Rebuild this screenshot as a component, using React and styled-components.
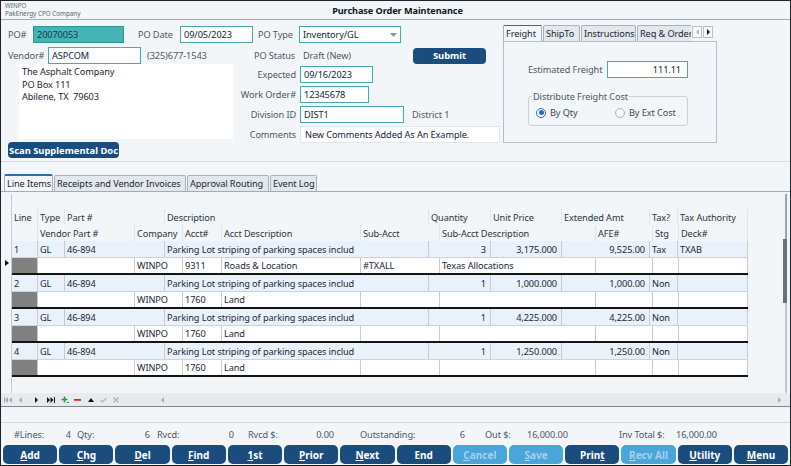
import React from 'react';
import styled, { createGlobalStyle } from 'styled-components';

const FONT = `"Noto Sans", "Open Sans", sans-serif`;

const Global = createGlobalStyle`
  html, body { margin: 0; padding: 0; background: #ffffff; }
  * { box-sizing: border-box; }
`;

const Window = styled.div`
  width: 791px;
  height: 466px;
  border: 1px solid #1c232b;
  background: #f2f6f9;
  display: flex;
  flex-direction: column;
  font-family: ${FONT};
  font-size: 9.2px;
  letter-spacing: -0.1px;
  color: #1d2733;
  overflow: hidden;
`;

const TitleBar = styled.div`
  height: 19px;
  flex: none;
  display: grid;
  grid-template-columns: 1fr auto 1fr;
  align-items: center;
  border-bottom: 1px solid #a3abb3;
  padding: 0 4px;
`;
const AppInfo = styled.div`
  font-size: 6.3px;
  line-height: 8px;
  color: #5a6570;
  align-self: start;
  padding-top: 1px;
  letter-spacing: 0;
`;
const Title = styled.div`
  font-weight: 700;
  font-size: 9.2px;
  color: #101820;
  padding-left: 4px;
`;

const HeaderForm = styled.div`
  height: 142px;
  flex: none;
  display: flex;
  padding: 5px 0 0 7px;
  border-bottom: 1px solid #d6dce2;
`;
const FormArea = styled.div`
  width: 495px;
  display: flex;
  flex-direction: column;
`;
const FormRow = styled.div`
  display: flex;
  align-items: center;
  height: 17px;
  margin-top: ${p => p.$mt || 0}px;
`;
const Label = styled.span`
  width: ${p => (p.$w ? `${p.$w}px` : 'auto')};
  flex: none;
  margin-left: ${p => p.$ml || 0}px;
  color: #4e5863;
  white-space: nowrap;
  text-align: ${p => p.$align || 'left'};
  justify-self: ${p => (p.$align === 'right' ? 'end' : 'start')};
`;
const Input = styled.div`
  width: ${p => p.$w}px;
  height: 17px;
  flex: none;
  border: 1.5px solid ${p => (p.$filled ? '#2f9597' : '#48a9a9')};
  background: ${p => (p.$filled ? '#44b4b7' : '#ffffff')};
  display: flex;
  align-items: center;
  justify-content: ${p => (p.$right ? 'flex-end' : 'space-between')};
  padding: 0 ${p => (p.$right ? 6 : 3)}px 0 3px;
  color: ${p => (p.$filled ? '#143c44' : '#15253a')};
  white-space: nowrap;
  overflow: hidden;
`;
const PlainBox = styled.div`
  width: ${p => p.$w}px;
  height: 17px;
  background: #ffffff;
  border: 1px solid #e2e7ec;
  display: flex;
  align-items: center;
  padding: 0 4px;
  color: #15253a;
  white-space: nowrap;
`;
const NavyButton = styled.div`
  width: ${p => p.$w}px;
  height: ${p => p.$h}px;
  margin-left: ${p => p.$ml || 0}px;
  margin-top: ${p => p.$mt || 0}px;
  flex: none;
  background: #1b4c7e;
  color: #ffffff;
  font-weight: 700;
  font-size: 9.4px;
  letter-spacing: 0;
  border-radius: 4px;
  display: flex;
  align-items: center;
  justify-content: center;
  white-space: nowrap;
`;
const LowerBlock = styled.div`
  display: flex;
`;
const AddressCol = styled.div`
  width: 242px;
  display: flex;
  flex-direction: column;
`;
const AddressBox = styled.div`
  margin-left: 11px;
  width: 214px;
  height: 75px;
  background: #ffffff;
  padding: 2px 3px;
  line-height: 12.5px;
  color: #1d2733;
`;
const DetailGrid = styled.div`
  margin-top: 2px;
  display: grid;
  grid-template-columns: 46px auto;
  column-gap: 4px;
  row-gap: 3px;
  grid-auto-rows: 17px;
  align-items: center;
`;
const FieldLine = styled.div`
  display: flex;
  align-items: center;
`;

/* Freight panel */
const SidePanel = styled.div`
  width: 214px;
  display: flex;
  flex-direction: column;
`;
const TabStrip = styled.div`
  display: flex;
  align-items: flex-end;
  height: ${p => p.$h}px;
  padding-left: ${p => p.$pl || 0}px;
  gap: 1px;
  border-bottom: ${p => (p.$line ? '1px solid #9fadbb' : 'none')};
  flex: none;
`;
const TabClip = styled.div`
  display: flex;
  align-items: flex-end;
  gap: 1px;
  width: ${p => p.$w}px;
  overflow: hidden;
  height: 100%;
`;
const Tab = styled.div`
  width: ${p => p.$w}px;
  flex: none;
  height: ${p => (p.$active ? 17 : 16)}px;
  padding: 0 2px;
  border: 1px solid #a8b2bc;
  border-bottom: none;
  border-top: ${p => (p.$active ? '2px solid #2b6cb3' : '1px solid #a8b2bc')};
  border-radius: 2px 2px 0 0;
  background: ${p => (p.$active ? '#f4f7fa' : '#e3e8ed')};
  display: flex;
  align-items: center;
  white-space: nowrap;
  overflow: hidden;
  color: #1d2733;
`;
const ArrowBox = styled.div`
  width: 10px;
  height: 12px;
  margin-bottom: 3px;
  border: 1px solid #b8c0c8;
  background: #f6f8fa;
  display: flex;
  align-items: center;
  justify-content: center;
`;
const PanelBody = styled.div`
  height: 102px;
  border: 1px solid #b5bec7;
  padding: 19px 0 0 24px;
  display: flex;
  flex-direction: column;
`;
const GroupBox = styled.fieldset`
  margin: 12px 0 0 0;
  width: 160px;
  height: 36px;
  border: 1px solid #c9d0d6;
  border-radius: 3px;
  padding: 3px 0 0 7px;
  display: flex;
  align-items: flex-start;
`;
const Legend = styled.legend`
  padding: 0 1px;
  margin-left: -4px;
  color: #4e5863;
  font-size: 9.2px;
`;
const RadioItem = styled.div`
  display: flex;
  align-items: center;
  gap: 4px;
  width: ${p => p.$w}px;
  color: #3f4a55;
`;
const RadioDot = styled.span`
  width: 10px;
  height: 10px;
  border-radius: 50%;
  border: ${p => (p.$on ? '1.5px solid #2c6bb5' : '1px solid #a9b1b9')};
  background: ${p => (p.$on ? '#ffffff' : '#f4f6f8')};
  display: flex;
  align-items: center;
  justify-content: center;
  &::after {
    content: '';
    width: 5px;
    height: 5px;
    border-radius: 50%;
    background: ${p => (p.$on ? '#2c6bb5' : 'transparent')};
  }
`;

/* Line items */
const GridPanel = styled.div`
  height: 215px;
  flex: none;
  display: flex;
  flex-direction: column;
  border-bottom: 1px solid #7d848b;
`;
const GridArea = styled.div`
  flex: 1;
  display: flex;
  padding-top: 2px;
`;
const Grid = styled.div`
  width: 737px;
  margin-left: 10px;
  border-left: 1px solid #c3cbd3;
  padding-top: 15px;
  display: flex;
  flex-direction: column;
  flex: none;
`;
const HeadRow = styled.div`
  display: grid;
  grid-template-columns: ${p => p.$cols};
  height: 16px;
`;
const HeadCell = styled.div`
  border-right: 1px solid #e0e5ea;
  padding: 0 2px;
  display: flex;
  align-items: center;
  white-space: nowrap;
  overflow: hidden;
  color: #2b3540;
`;
const Record = styled.div`
  position: relative;
  border-bottom: 2px solid #141414;
`;
const Indicator = styled.span`
  position: absolute;
  left: -7px;
  top: 19px;
  width: 0;
  height: 0;
  border-top: 3px solid transparent;
  border-bottom: 3px solid transparent;
  border-left: 4px solid #111;
`;
const DataRow = styled.div`
  display: grid;
  grid-template-columns: ${p => p.$cols};
  height: ${p => p.$h}px;
  background: ${p => p.$bg};
  border-bottom: ${p => (p.$line ? '1px solid #cdd3d8' : 'none')};
`;
const Cell = styled.div`
  border-right: 1px solid #c6ccd2;
  padding: 0 ${p => (p.$right ? 4 : 2)}px 0 2px;
  display: flex;
  align-items: center;
  justify-content: ${p => (p.$right ? 'flex-end' : 'flex-start')};
  white-space: nowrap;
  overflow: hidden;
  background: ${p => (p.$gray ? '#808080' : 'transparent')};
  color: #1d2733;
`;
const VScroll = styled.div`
  margin-left: auto;
  margin-right: 3px;
  width: 4px;
  display: flex;
  flex-direction: column;
  align-items: flex-end;
`;
const ScrollLine = styled.div`
  flex: ${p => p.$flex || 'none'};
  height: ${p => (p.$h ? `${p.$h}px` : 'auto')};
  background: ${p => p.$c};
  width: ${p => (p.$thick ? 4 : 2)}px;
`;
const NavStrip = styled.div`
  height: 13px;
  flex: none;
  display: flex;
  align-items: center;
  background: #e7ebef;
  padding-left: 2px;
`;
const NavSlot = styled.span`
  margin-left: ${p => p.$ml}px;
  display: flex;
  align-items: center;
`;
const HScroll = styled.div`
  margin-left: 42px;
  width: 620px;
  display: flex;
  justify-content: space-between;
  align-items: center;
`;
const BlankBand = styled.div`
  height: 16px;
  flex: none;
  border-bottom: 1px solid #d2d8de;
`;
const SummaryBar = styled.div`
  height: 21px;
  flex: none;
  display: flex;
  align-items: center;
  padding: 1px 0 0 13px;
  color: #4e5863;
`;
const SumCell = styled.span`
  width: ${p => p.$w}px;
  flex: none;
  text-align: ${p => (p.$right ? 'right' : 'left')};
  white-space: nowrap;
`;
const ButtonBar = styled.div`
  height: 21px;
  flex: none;
  display: flex;
  gap: 2px;
  padding: 1px 2px 1px 2px;
`;
const ActionButton = styled.div`
  flex: 1;
  border-radius: 5px;
  background: ${p => (p.$disabled ? '#4aa5db' : '#1b4c7e')};
  color: ${p => (p.$disabled ? '#a3d2ee' : '#ffffff')};
  font-weight: 700;
  font-size: 10px;
  letter-spacing: 0;
  display: flex;
  align-items: center;
  justify-content: center;
  white-space: nowrap;
  u { text-underline-offset: 1px; }
`;

const MAIN_COLS = '26px 27px 100px 264px 62px 71px 88px 28px 70px';
const SUB_COLS = '26px 97px 48px 39px 139px 79px 156px 57px 26px 69px';

const records = [
  { n: '1', qty: '3', price: '3,175.000', ext: '9,525.00', tax: 'Tax', auth: 'TXAB', acct: '9311', acctDesc: 'Roads & Location', sub: '#TXALL', subDesc: 'Texas Allocations', current: true },
  { n: '2', qty: '1', price: '1,000.000', ext: '1,000.00', tax: 'Non', auth: '', acct: '1760', acctDesc: 'Land', sub: '', subDesc: '' },
  { n: '3', qty: '1', price: '4,225.000', ext: '4,225.00', tax: 'Non', auth: '', acct: '1760', acctDesc: 'Land', sub: '', subDesc: '' },
  { n: '4', qty: '1', price: '1,250.000', ext: '1,250.00', tax: 'Non', auth: '', acct: '1760', acctDesc: 'Land', sub: '', subDesc: '' },
];

const Tri = ({ dir = 'right', color = '#111', w = 4, h = 7 }) => (
  <svg width={w} height={h} viewBox={`0 0 ${w} ${h}`}>
    {dir === 'right' && <path d={`M0 0 L${w} ${h / 2} L0 ${h} Z`} fill={color} />}
    {dir === 'left' && <path d={`M${w} 0 L0 ${h / 2} L${w} ${h} Z`} fill={color} />}
    {dir === 'down' && <path d={`M0 0 L${w} 0 L${w / 2} ${h} Z`} fill={color} />}
    {dir === 'up' && <path d={`M0 ${h} L${w} ${h} L${w / 2} 0 Z`} fill={color} />}
  </svg>
);

const NavFirst = ({ c }) => (
  <svg width="8" height="6" viewBox="0 0 8 6"><rect x="0" y="0" width="1" height="6" fill={c} /><path d="M4 0 L1 3 L4 6Z M8 0 L5 3 L8 6Z" fill={c} /></svg>
);
const NavLast = ({ c }) => (
  <svg width="8" height="6" viewBox="0 0 8 6"><path d="M0 0 L3 3 L0 6Z M3.5 0 L6.5 3 L3.5 6Z" fill={c} /><rect x="7" y="0" width="1" height="6" fill={c} /></svg>
);
const NavPlus = () => (
  <svg width="8" height="8" viewBox="0 0 8 8"><path d="M3.5 0.5 V6.5 M0.5 3.5 H6.5" stroke="#2a9d2a" strokeWidth="1.6" /><path d="M6 6.5 H8" stroke="#2a9d2a" strokeWidth="1" /></svg>
);
const NavMinus = () => (
  <svg width="7" height="6" viewBox="0 0 7 6"><rect x="0" y="2" width="7" height="1.8" fill="#d42a2a" /></svg>
);
const NavCheck = () => (
  <svg width="7" height="6" viewBox="0 0 7 6"><path d="M0.5 3 L2.5 5 L6.5 0.8" stroke="#a9b2ba" strokeWidth="1.1" fill="none" /></svg>
);
const NavX = () => (
  <svg width="6" height="6" viewBox="0 0 6 6"><path d="M0.5 0.5 L5.5 5.5 M5.5 0.5 L0.5 5.5" stroke="#a9b2ba" strokeWidth="1.1" /></svg>
);

const buttons = [
  { u: 'A', rest: 'dd' },
  { u: 'C', rest: 'hg' },
  { u: 'D', rest: 'el' },
  { u: 'F', rest: 'ind' },
  { u: '1', rest: 'st' },
  { u: 'P', rest: 'rior' },
  { u: 'N', rest: 'ext' },
  { u: '', rest: 'End' },
  { u: 'C', rest: 'ancel', disabled: true },
  { u: 'S', rest: 'ave', disabled: true },
  { pre: 'Prin', u: 't', rest: '' },
  { u: 'R', rest: 'ecv All', disabled: true },
  { u: 'U', rest: 'tility' },
  { u: 'M', rest: 'enu' },
];

export default function App() {
  return (
    <>
      <Global />
      <Window>
        <TitleBar>
          <AppInfo>
            <div>WINPO</div>
            <div>PakEnergy CPO Company</div>
          </AppInfo>
          <Title>Purchase Order Maintenance</Title>
          <span />
        </TitleBar>

        <HeaderForm>
          <FormArea>
            <FormRow $mt={1}>
              <Label $w={25}>PO#</Label>
              <Input $w={91} $filled>20070053</Input>
              <Label $w={42} $ml={14}>PO Date</Label>
              <Input $w={73}>09/05/2023</Input>
              <Label $w={41} $ml={5}>PO Type</Label>
              <Input $w={102}>
                <span>Inventory/GL</span>
                <Tri dir="down" color="#8c949b" w={7} h={4} />
              </Input>
            </FormRow>
            <FormRow $mt={4}>
              <Label $w={40}>Vendor#</Label>
              <Input $w={93}>ASPCOM</Input>
              <Label $w={107} $ml={6}>(325)677-1543</Label>
              <Label $w={49}>PO Status</Label>
              <Label $w={110}>Draft (New)</Label>
              <NavyButton $w={73} $h={16}>Submit</NavyButton>
            </FormRow>
            <LowerBlock>
              <AddressCol>
                <AddressBox>
                  <div>The Asphalt Company</div>
                  <div>PO Box 111</div>
                  <div>Abilene, TX&nbsp;&nbsp;79603</div>
                </AddressBox>
                <NavyButton $w={111} $h={16} $mt={3}>Scan Supplemental Doc</NavyButton>
              </AddressCol>
              <DetailGrid>
                <Label $align="right">Expected</Label>
                <FieldLine><Input $w={73}>09/16/2023</Input></FieldLine>
                <Label $align="right">Work Order#</Label>
                <FieldLine><Input $w={69}>12345678</Input></FieldLine>
                <Label $align="right">Division ID</Label>
                <FieldLine>
                  <Input $w={104}>DIST1</Input>
                  <Label $ml={8}>District 1</Label>
                </FieldLine>
                <Label $align="right">Comments</Label>
                <FieldLine><PlainBox $w={200}>New Comments Added As An Example.</PlainBox></FieldLine>
              </DetailGrid>
            </LowerBlock>
          </FormArea>

          <SidePanel>
            <TabStrip $h={16}>
              <TabClip $w={188}>
                <Tab $w={39} $active>Freight</Tab>
                <Tab $w={37}>ShipTo</Tab>
                <Tab $w={55}>Instructions</Tab>
                <Tab $w={60}>Req &amp; Order</Tab>
              </TabClip>
              <ArrowBox><Tri dir="left" color="#b2bac2" w={3} h={6} /></ArrowBox>
              <ArrowBox><Tri dir="right" color="#111" w={3} h={6} /></ArrowBox>
            </TabStrip>
            <PanelBody>
              <FormRow>
                <Label $w={79}>Estimated Freight</Label>
                <Input $w={81} $right>111.11</Input>
              </FormRow>
              <GroupBox>
                <Legend>Distribute Freight Cost</Legend>
                <RadioItem $w={79}><RadioDot $on />By Qty</RadioItem>
                <RadioItem $w={70}><RadioDot />By Ext Cost</RadioItem>
              </GroupBox>
            </PanelBody>
          </SidePanel>
        </HeaderForm>

        <TabStrip $h={30} $pl={3} $line>
          <Tab $w={49} $active>Line Items</Tab>
          <Tab $w={132}>Receipts and Vendor Invoices</Tab>
          <Tab $w={82}>Approval Routing</Tab>
          <Tab $w={47}>Event Log</Tab>
        </TabStrip>

        <GridPanel>
          <GridArea>
            <Grid>
              <HeadRow $cols={MAIN_COLS}>
                {['Line', 'Type', 'Part #', 'Description', 'Quantity', 'Unit Price', 'Extended Amt', 'Tax?', 'Tax Authority'].map((h, i) => (
                  <HeadCell key={i}>{h}</HeadCell>
                ))}
              </HeadRow>
              <HeadRow $cols={SUB_COLS}>
                {['', 'Vendor Part #', 'Company', 'Acct#', 'Acct Description', 'Sub-Acct', 'Sub-Acct Description', 'AFE#', 'Stg', 'Deck#'].map((h, i) => (
                  <HeadCell key={i}>{h}</HeadCell>
                ))}
              </HeadRow>
              {records.map(r => (
                <Record key={r.n}>
                  {r.current && <Indicator />}
                  <DataRow $cols={MAIN_COLS} $h={17} $bg="#e9f2fa" $line>
                    <Cell>{r.n}</Cell>
                    <Cell>GL</Cell>
                    <Cell>46-894</Cell>
                    <Cell>Parking Lot striping of parking spaces includ</Cell>
                    <Cell $right>{r.qty}</Cell>
                    <Cell $right>{r.price}</Cell>
                    <Cell $right>{r.ext}</Cell>
                    <Cell>{r.tax}</Cell>
                    <Cell>{r.auth}</Cell>
                  </DataRow>
                  <DataRow $cols={SUB_COLS} $h={15} $bg="#ffffff">
                    <Cell $gray />
                    <Cell />
                    <Cell>WINPO</Cell>
                    <Cell>{r.acct}</Cell>
                    <Cell>{r.acctDesc}</Cell>
                    <Cell>{r.sub}</Cell>
                    <Cell>{r.subDesc}</Cell>
                    <Cell />
                    <Cell />
                    <Cell />
                  </DataRow>
                </Record>
              ))}
            </Grid>
            <VScroll>
              <ScrollLine $h={45} $c="#9aa2aa" />
              <ScrollLine $h={64} $c="#6a7279" $thick />
              <ScrollLine $flex="1" $c="#c3c9cf" />
            </VScroll>
          </GridArea>
          <NavStrip>
            <NavSlot $ml={1}><NavFirst c="#a3acb4" /></NavSlot>
            <NavSlot $ml={7}><Tri dir="left" color="#a3acb4" w={3} h={6} /></NavSlot>
            <NavSlot $ml={13}><Tri dir="right" color="#111" w={3} h={6} /></NavSlot>
            <NavSlot $ml={9}><NavLast c="#111" /></NavSlot>
            <NavSlot $ml={6}><NavPlus /></NavSlot>
            <NavSlot $ml={5}><NavMinus /></NavSlot>
            <NavSlot $ml={7}><Tri dir="up" color="#111" w={6} h={4} /></NavSlot>
            <NavSlot $ml={6}><NavCheck /></NavSlot>
            <NavSlot $ml={6}><NavX /></NavSlot>
            <HScroll>
              <Tri dir="left" color="#a3acb4" w={3} h={6} />
              <Tri dir="right" color="#a3acb4" w={3} h={6} />
            </HScroll>
          </NavStrip>
        </GridPanel>

        <BlankBand />

        <SummaryBar>
          <SumCell $w={51}>#Lines:</SumCell>
          <SumCell $w={6} $right>4</SumCell>
          <SumCell $w={6} />
          <SumCell $w={62}>Qty:</SumCell>
          <SumCell $w={11} $right>6</SumCell>
          <SumCell $w={7} />
          <SumCell $w={66}>Rvcd:</SumCell>
          <SumCell $w={11} $right>0</SumCell>
          <SumCell $w={14} />
          <SumCell $w={60}>Rvcd $:</SumCell>
          <SumCell $w={26} $right>0.00</SumCell>
          <SumCell $w={26} />
          <SumCell $w={94}>Outstanding:</SumCell>
          <SumCell $w={11} $right>6</SumCell>
          <SumCell $w={20} />
          <SumCell $w={42}>Out $:</SumCell>
          <SumCell $w={40} $right>16,000.00</SumCell>
          <SumCell $w={52} />
          <SumCell $w={57}>Inv Total $:</SumCell>
          <SumCell $w={40} $right>16,000.00</SumCell>
        </SummaryBar>

        <ButtonBar>
          {buttons.map((b, i) => (
            <ActionButton key={i} $disabled={b.disabled}>
              {b.pre}
              {b.u && <u>{b.u}</u>}
              {b.rest}
            </ActionButton>
          ))}
        </ButtonBar>
      </Window>
    </>
  );
}
